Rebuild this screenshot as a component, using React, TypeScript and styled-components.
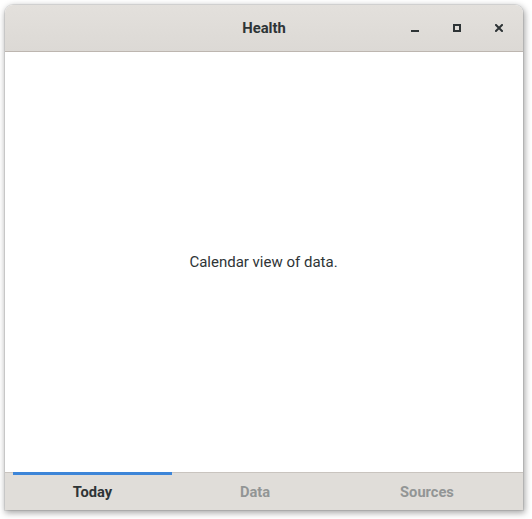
import React from "react";
import styled, { createGlobalStyle } from "styled-components";

const Global = createGlobalStyle`
  html, body { margin: 0; padding: 0; background: #ffffff; }
  body { font-family: Roboto, "Noto Sans", "Liberation Sans", sans-serif; }
`;

const Page = styled.div`
  width: 532px;
  height: 519px;
  padding: 5px 0 0 5px;
  box-sizing: border-box;
`;

const Window = styled.div`
  width: 518px;
  height: 505px;
  display: flex;
  flex-direction: column;
  border-radius: 8px 8px 0 0;
  overflow: hidden;
  box-shadow: 1px 2px 6px 1px rgba(0, 0, 0, 0.35), 0 0 0 1px rgba(0, 0, 0, 0.08);
  background: #ffffff;
`;

const TitleBar = styled.div`
  height: 46px;
  flex: none;
  display: grid;
  grid-template-columns: 1fr auto 1fr;
  align-items: center;
  background: linear-gradient(#e3e0dc, #dcd9d5);
  border-bottom: 1px solid #bdb6b0;
  color: #2e3436;
`;

const Title = styled.div`
  grid-column: 2;
  font-weight: 700;
  font-size: 14.8px;
  padding-bottom: 1px;
`;

const Controls = styled.div`
  grid-column: 3;
  justify-self: end;
  display: flex;
  align-items: center;
  padding-right: 3px;
`;

const CtlButton = styled.div`
  width: 42px;
  height: 30px;
  display: flex;
  align-items: center;
  justify-content: center;
`;

const Content = styled.div`
  flex: 1;
  display: flex;
  align-items: center;
  justify-content: center;
  font-size: 15px;
  color: #2e3436;
  padding-right: 1px;
`;

const TabBar = styled.div`
  height: 37px;
  flex: none;
  display: grid;
  grid-template-columns: 159px 166px 1fr;
  padding: 0 7px 0 8px;
  background: #e0ddd9;
  border-top: 1px solid #c9c4bf;
`;

const Tab = styled.div<{ $active?: boolean }>`
  display: flex;
  align-items: center;
  justify-content: center;
  font-size: 14.67px;
  font-weight: 700;
  color: ${(p) => (p.$active ? "#2e3436" : "#929595")};
  border-top: 3px solid ${(p) => (p.$active ? "#3d85d8" : "transparent")};
  margin-top: -1px;
  padding-bottom: 2px;
`;

export default function App() {
  return (
    <Page>
      <Global />
      <Window>
        <TitleBar>
          <Title>Health</Title>
          <Controls>
            <CtlButton>
              <svg width="8" height="8" viewBox="0 0 8 8">
                <rect x="0" y="6" width="8" height="2" fill="#2e3436" />
              </svg>
            </CtlButton>
            <CtlButton>
              <svg width="8" height="8" viewBox="0 0 8 8">
                <rect x="1" y="1" width="6" height="6" fill="none" stroke="#2e3436" strokeWidth="2" />
              </svg>
            </CtlButton>
            <CtlButton>
              <svg width="8" height="8" viewBox="0 0 8 8">
                <path d="M1 1 L7 7 M7 1 L1 7" stroke="#2e3436" strokeWidth="2" strokeLinecap="square" />
              </svg>
            </CtlButton>
          </Controls>
        </TitleBar>
        <Content>Calendar view of data.</Content>
        <TabBar>
          <Tab $active>Today</Tab>
          <Tab>Data</Tab>
          <Tab>Sources</Tab>
        </TabBar>
      </Window>
    </Page>
  );
}
